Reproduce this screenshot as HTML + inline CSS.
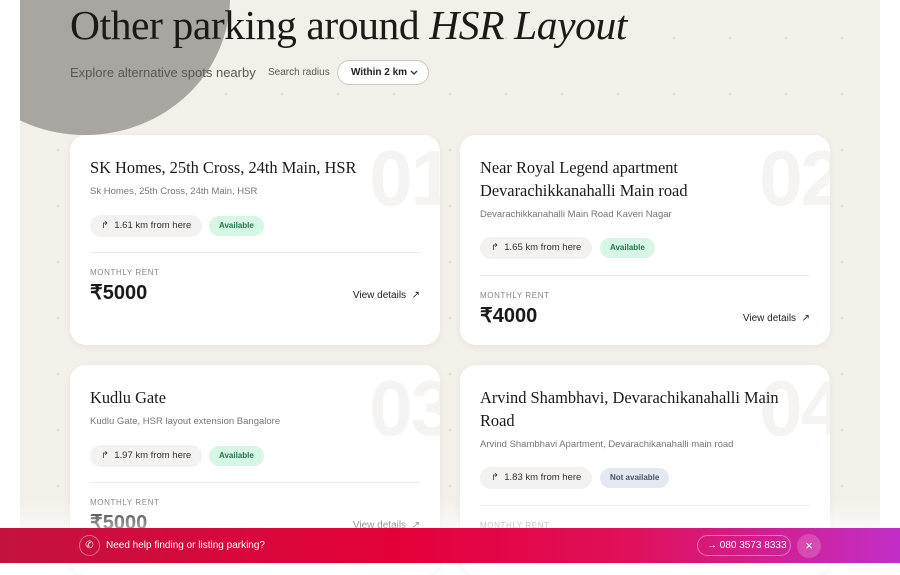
<!DOCTYPE html>
<html><head><meta charset="utf-8"><style>
*{box-sizing:border-box;margin:0;padding:0}
body{width:900px;height:563px;overflow:hidden;background:#fff;font-family:"Liberation Sans",sans-serif;position:relative}
.bg{position:absolute;left:20px;top:0;width:860px;height:563px;background:#f3f0ea;overflow:hidden;
background-image:radial-gradient(circle,#e2ddd5 1.1px,transparent 1.5px);background-size:56px 56px;background-position:10px 10px}
.circle{position:absolute;left:-80px;top:-140px;width:290px;height:275px;border-radius:50%;background:#a9a5a1}
h1{position:absolute;left:70px;top:1px;font-family:"Liberation Serif",serif;font-weight:400;font-size:41.5px;color:#1c1a18;letter-spacing:-0.4px}
h1 i{font-style:italic}
.sub{position:absolute;left:70px;top:65px;font-size:13px;color:#5a5652}
.sr{position:absolute;left:268px;top:67px;font-size:10px;color:#5a5652}
.sel{position:absolute;left:337px;top:60px;width:92px;height:25px;border:1px solid #cfcac3;border-radius:13px;background:#fff;font-size:10px;font-weight:bold;color:#222;padding:6px 0 0 13px}
.sel svg{position:absolute;right:10px;top:9px}
.card{position:absolute;width:370px;height:210px;background:#fff;border-radius:16px;box-shadow:0 2px 8px rgba(0,0,0,.05);overflow:hidden}
.num{position:absolute;right:-12px;top:-2px;font-size:78px;font-weight:bold;color:#f5f4f2;letter-spacing:-2px}
.t{position:absolute;left:20px;top:21px;font-family:"Liberation Serif",serif;font-size:16.4px;color:#1c1a18;line-height:23px;width:330px}
.a{position:absolute;left:20px;font-size:9.5px;color:#7a7672}
.pill{position:absolute;left:20px;height:22px;border-radius:11px;background:#f3f2f0;font-size:9.5px;color:#333;padding:5px 11px 0 11px}
.st{position:absolute;height:20px;border-radius:10px;font-size:8px;font-weight:bold;padding:5px 10px 0}
.av{background:#d6f6e6;color:#1f7a4a}
.na{background:#e4e8f0;color:#4a5468}
.hr{position:absolute;left:20px;right:20px;height:1px;background:#ececea}
.mr{position:absolute;left:20px;font-size:8px;color:#8a8682;letter-spacing:.6px}
.pr{position:absolute;left:20px;font-size:20px;font-weight:bold;color:#1a1a1a}
.vd{position:absolute;right:20px;font-size:10px;color:#222}
.fade{position:absolute;left:0;top:500px;width:900px;height:28px;background:linear-gradient(rgba(255,255,255,0),rgba(255,255,255,.6))}
.ban{position:absolute;left:0;top:528px;width:900px;height:35px;background:linear-gradient(90deg,#c4123e 0%,#e4003a 45%,#e0105a 70%,#c22ec8 100%);color:#fff;font-size:10px}
</style></head><body>
<div class="bg"><div class="circle"></div></div>
<h1>Other parking around <i>HSR Layout</i></h1>
<div class="sub">Explore alternative spots nearby</div>
<div class="sr">Search radius</div>
<div class="sel">Within 2 km<svg width="8" height="6" viewBox="0 0 8 6"><path d="M1 1l3 3 3-3" stroke="#333" stroke-width="1.3" fill="none"/></svg></div>

<div class="card" style="left:70px;top:135px">
<div class="num">01</div>
<div class="t">SK Homes, 25th Cross, 24th Main, HSR</div>
<div class="a" style="top:51px">Sk Homes, 25th Cross, 24th Main, HSR</div>
<div class="pill" style="top:80px">↱&nbsp; 1.61 km from here</div>
<div class="st av" style="left:139px;top:81px">Available</div>
<div class="hr" style="top:117px"></div>
<div class="mr" style="top:133px">MONTHLY RENT</div>
<div class="pr" style="top:145px">₹5000</div>
<div class="vd" style="top:155px">View details &nbsp;↗</div>
</div>

<div class="card" style="left:460px;top:135px">
<div class="num">02</div>
<div class="t">Near Royal Legend apartment Devarachikkanahalli Main road</div>
<div class="a" style="top:74px">Devarachikkanahalli Main Road Kaveri Nagar</div>
<div class="pill" style="top:102px">↱&nbsp; 1.65 km from here</div>
<div class="st av" style="left:140px;top:103px">Available</div>
<div class="hr" style="top:140px"></div>
<div class="mr" style="top:156px">MONTHLY RENT</div>
<div class="pr" style="top:168px">₹4000</div>
<div class="vd" style="top:178px">View details &nbsp;↗</div>
</div>

<div class="card" style="left:70px;top:365px">
<div class="num">03</div>
<div class="t">Kudlu Gate</div>
<div class="a" style="top:51px">Kudlu Gate, HSR layout extension Bangalore</div>
<div class="pill" style="top:80px">↱&nbsp; 1.97 km from here</div>
<div class="st av" style="left:139px;top:81px">Available</div>
<div class="hr" style="top:117px"></div>
<div class="mr" style="top:133px">MONTHLY RENT</div>
<div class="pr" style="top:145px">₹5000</div>
<div class="vd" style="top:155px">View details &nbsp;↗</div>
</div>

<div class="card" style="left:460px;top:365px">
<div class="num">04</div>
<div class="t">Arvind Shambhavi, Devarachikanahalli Main Road</div>
<div class="a" style="top:74px">Arvind Shambhavi Apartment, Devarachikanahalli main road</div>
<div class="pill" style="top:102px">↱&nbsp; 1.83 km from here</div>
<div class="st na" style="left:140px;top:103px">Not available</div>
<div class="hr" style="top:140px"></div>
<div class="mr" style="top:156px">MONTHLY RENT</div>
</div>

<div class="fade"></div>
<div class="ban">
<div style="position:absolute;left:79px;top:7px;width:21px;height:21px;border:1px solid rgba(255,255,255,.4);border-radius:50%;text-align:center;line-height:19px;font-size:10px">✆</div>
<div style="position:absolute;left:106px;top:12px">Need help finding or listing parking?</div>
<div style="position:absolute;left:697px;top:7px;width:94px;height:21px;border:1px solid rgba(255,255,255,.4);border-radius:11px;padding:4px 0 0 9px">→ 080 3573 8333</div>
<div style="position:absolute;left:797px;top:6px;width:24px;height:24px;border-radius:50%;background:rgba(255,255,255,.18);text-align:center;line-height:24px;font-size:13px">×</div>
</div>
</body></html>
